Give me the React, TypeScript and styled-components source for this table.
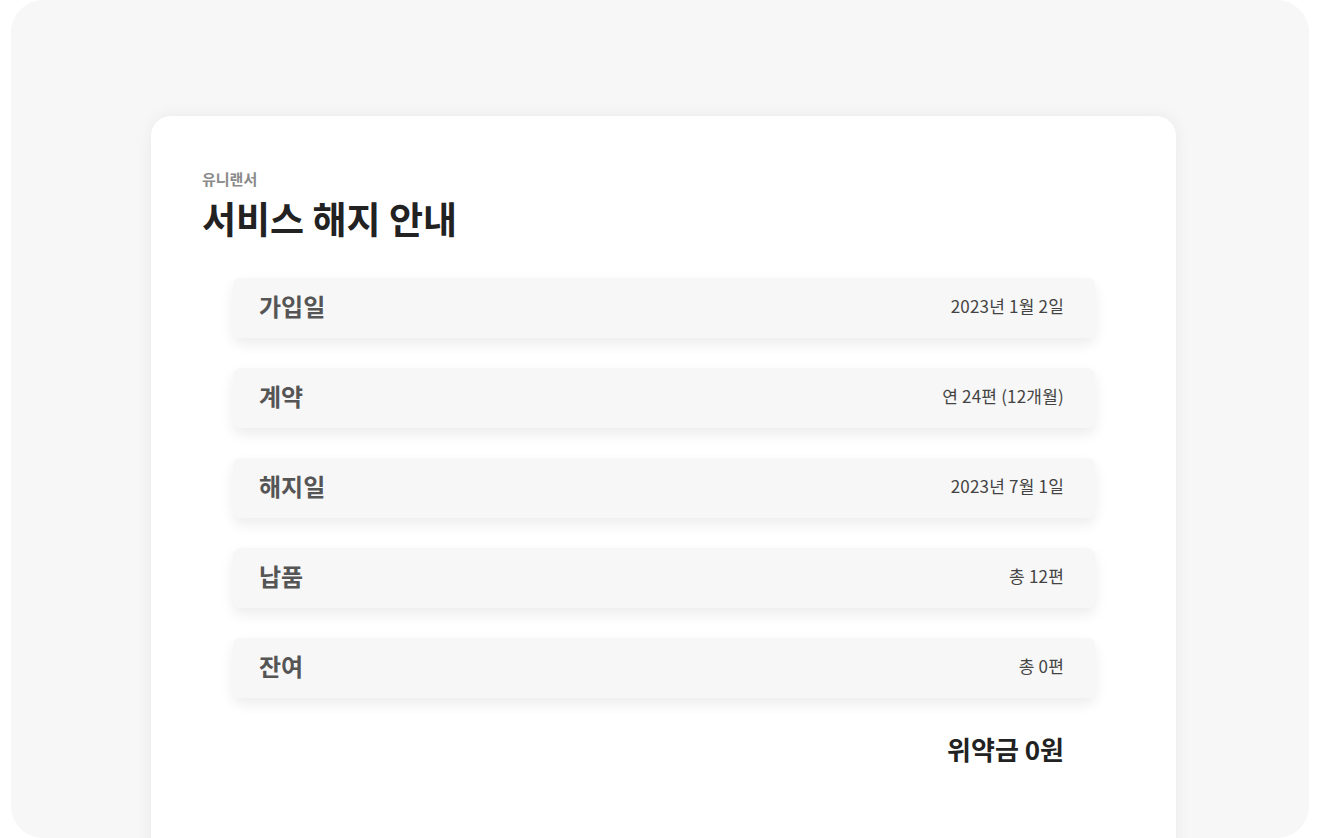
import React from 'react';
import styled, { createGlobalStyle } from 'styled-components';

const GlobalStyle = createGlobalStyle`
  html, body {
    margin: 0;
    padding: 0;
    background: #ffffff;
  }
  body {
    font-family: "Noto Sans CJK KR", "Noto Sans", sans-serif;
  }
`;

const Frame = styled.div`
  margin: 0 17px 0 11px;
  height: 838px;
  background-color: #f7f7f7;
  border-radius: 32px;
  overflow: hidden;
  padding: 116px 0 0 140px;
  box-sizing: border-box;
`;

const Card = styled.div`
  width: 1025px;
  min-height: 760px;
  background-color: #ffffff;
  border-radius: 20px;
  box-shadow: 0 0 18px rgba(0, 0, 0, 0.06);
  padding: 53px 51px 60px;
  box-sizing: border-box;
`;

const Brand = styled.div`
  font-size: 15px;
  font-weight: 700;
  color: #8a8a8a;
  line-height: 20px;
`;

const Title = styled.h1`
  margin: 4px 0 0;
  font-size: 37px;
  font-weight: 700;
  color: #222222;
  line-height: 50px;
`;

const List = styled.div`
  margin: 35px 30px 0 31px;
  display: flex;
  flex-direction: column;
  gap: 30px;
`;

const Row = styled.div`
  height: 60px;
  display: flex;
  align-items: center;
  justify-content: space-between;
  padding: 0 31px 5px 26px;
  box-sizing: border-box;
  background-color: #f7f7f7;
  border-radius: 8px;
  box-shadow: 0 6px 14px rgba(0, 0, 0, 0.08);
`;

const Label = styled.span`
  font-size: 24px;
  font-weight: 700;
  color: #555555;
`;

const Value = styled.span`
  font-size: 17px;
  font-weight: 400;
  color: #444444;
  letter-spacing: 0.2px;
`;

const Penalty = styled.div`
  margin: 32px 61px 0 0;
  text-align: right;
  font-size: 26px;
  font-weight: 700;
  color: #222222;
`;

const rows = [
  { label: '가입일', value: '2023년 1월 2일' },
  { label: '계약', value: '연 24편 (12개월)' },
  { label: '해지일', value: '2023년 7월 1일' },
  { label: '납품', value: '총 12편' },
  { label: '잔여', value: '총 0편' },
];

const App = () => {
  return (
    <>
      <GlobalStyle />
      <Frame>
        <Card>
          <Brand>유니랜서</Brand>
          <Title>서비스 해지 안내</Title>
          <List>
            {rows.map((row) => (
              <Row key={row.label}>
                <Label>{row.label}</Label>
                <Value>{row.value}</Value>
              </Row>
            ))}
          </List>
          <Penalty>위약금 0원</Penalty>
        </Card>
      </Frame>
    </>
  );
};

export default App;
